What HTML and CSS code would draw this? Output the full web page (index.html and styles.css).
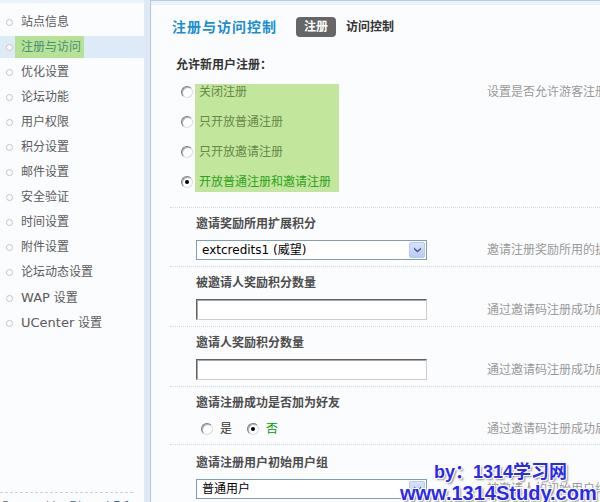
FILE: index.html
```html
<!DOCTYPE html>
<html lang="zh-CN">
<head>
<meta charset="utf-8">
<title>注册与访问控制</title>
<link rel="stylesheet" href="styles.css">
</head>
<body>
<div class="page">
  <aside class="sidebar">
    <ul class="menu">
      <li class="menu-item"><span class="bullet"></span><span class="menu-text">站点信息</span></li>
      <li class="menu-item is-active"><span class="bullet"></span><span class="menu-text">注册与访问</span></li>
      <li class="menu-item"><span class="bullet"></span><span class="menu-text">优化设置</span></li>
      <li class="menu-item"><span class="bullet"></span><span class="menu-text">论坛功能</span></li>
      <li class="menu-item"><span class="bullet"></span><span class="menu-text">用户权限</span></li>
      <li class="menu-item"><span class="bullet"></span><span class="menu-text">积分设置</span></li>
      <li class="menu-item"><span class="bullet"></span><span class="menu-text">邮件设置</span></li>
      <li class="menu-item"><span class="bullet"></span><span class="menu-text">安全验证</span></li>
      <li class="menu-item"><span class="bullet"></span><span class="menu-text">时间设置</span></li>
      <li class="menu-item"><span class="bullet"></span><span class="menu-text">附件设置</span></li>
      <li class="menu-item"><span class="bullet"></span><span class="menu-text">论坛动态设置</span></li>
      <li class="menu-item menu-item-latin"><span class="bullet"></span><span class="menu-text"><span class="latin">WAP</span> 设置</span></li>
      <li class="menu-item menu-item-latin"><span class="bullet"></span><span class="menu-text"><span class="latin">UCenter</span> 设置</span></li>
    </ul>
    <div class="sidebar-foot">Powered by <span class="foot-link">Discuz! 7.1</span></div>
  </aside>
  <div class="strip"></div>
  <main class="main">
    <div class="header">
      <h1 class="title">注册与访问控制</h1>
      <span class="tab is-current">注册</span>
      <span class="tab">访问控制</span>
    </div>

    <section class="group">
      <div class="group-label">允许新用户注册：</div>
      <div class="option-grid">
        <div class="options">
          <div class="option"><span class="radio"></span><span class="option-text">关闭注册</span></div>
          <div class="option"><span class="radio"></span><span class="option-text">只开放普通注册</span></div>
          <div class="option"><span class="radio"></span><span class="option-text">只开放邀请注册</span></div>
          <div class="option is-checked"><span class="radio is-on"></span><span class="option-text">开放普通注册和邀请注册</span></div>
        </div>
        <div class="desc desc-top">设置是否允许游客注册</div>
      </div>
    </section>

    <section class="row">
      <div class="row-label">邀请奖励所用扩展积分</div>
      <div class="row-control">
        <div class="select"><span class="select-value">extcredits1 (威望)</span><span class="select-btn"><svg width="7" height="6" viewBox="0 0 7 6"><path d="M0 0.5 L3.5 3.5 L7 0.5 L7 2.5 L3.5 5.5 L0 2.5 Z" fill="#4d6185"/></svg></span></div>
      </div>
      <div class="desc">邀请注册奖励所用的扩展积分</div>
    </section>

    <section class="row">
      <div class="row-label">被邀请人奖励积分数量</div>
      <div class="row-control"><div class="input"></div></div>
      <div class="desc">通过邀请码注册成功后被邀请人获得的积分</div>
    </section>

    <section class="row">
      <div class="row-label">邀请人奖励积分数量</div>
      <div class="row-control"><div class="input"></div></div>
      <div class="desc">通过邀请码注册成功后邀请人获得的积分</div>
    </section>

    <section class="row">
      <div class="row-label">邀请注册成功是否加为好友</div>
      <div class="row-control">
        <div class="radio-group">
          <span class="choice"><span class="radio"></span><span class="choice-text">是</span></span>
          <span class="choice is-checked"><span class="radio is-on"></span><span class="choice-text">否</span></span>
        </div>
      </div>
      <div class="desc">通过邀请码注册成功后，邀请人和被邀请人自动加为好友</div>
    </section>

    <section class="row row-last">
      <div class="row-label">邀请注册用户初始用户组</div>
      <div class="row-control">
        <div class="select"><span class="select-value">普通用户</span><span class="select-btn"><svg width="7" height="6" viewBox="0 0 7 6"><path d="M0 0.5 L3.5 3.5 L7 0.5 L7 2.5 L3.5 5.5 L0 2.5 Z" fill="#4d6185"/></svg></span></div>
      </div>
      <div class="desc">被邀请人的初始用户组</div>
    </section>
  </main>

  <div class="watermark">
    <div class="wm-line1">by：1314学习网</div>
    <div class="wm-line2">www.1314Study.com</div>
  </div>
</div>
</body>
</html>
```

FILE: styles.css
```css
* { box-sizing: border-box; }

html, body {
  margin: 0;
  padding: 0;
  height: 100%;
  overflow: hidden;
}

body {
  font-family: "DejaVu Sans", "Noto Sans CJK SC", sans-serif;
  font-size: 12px;
  line-height: 16px;
  color: #555;
  background: #fbfcfe;
}

.page {
  position: relative;
  display: flex;
  height: 502px;
  overflow: hidden;
}

/* ---------- sidebar ---------- */
.sidebar {
  width: 144px;
  flex: none;
  display: flex;
  flex-direction: column;
  padding-top: 11px;
  background: linear-gradient(#e9f2fa 0 3px, #fafcfe 3px);
}

.menu {
  list-style: none;
  margin: 0;
  padding: 0;
  display: flex;
  flex-direction: column;
  gap: 3px;
}

.menu-item {
  display: flex;
  align-items: center;
  height: 22px;
  padding-left: 6px;
  color: #5a5a5a;
}

.menu-item-latin { margin-top: 1px; margin-bottom: -1px; }

.menu-item.is-active { background: #dcebf7; }

.bullet {
  flex: none;
  width: 7px;
  height: 7px;
  margin-right: 2px;
  border: 1px solid #c2c2c2;
  border-radius: 50%;
  background: #fff;
}

.menu-text {
  line-height: 22px;
  padding: 0 3px 0 6px;
  white-space: nowrap;
}

.is-active .menu-text {
  background: #b5e297;
  color: #4b8e72;
}

.latin { font-size: 13px; }

.sidebar-foot {
  margin-top: auto;
  margin-right: 11px;
  height: 10px;
  padding-top: 5px;
  border-top: 1px dashed #d2d2d2;
  font-size: 11px;
  line-height: 16px;
  color: #666;
  white-space: nowrap;
  text-align: center;
}

.foot-link { color: #1c6eb8; }

.strip {
  width: 6px;
  flex: none;
  background: #dde9f5;
}

/* ---------- main ---------- */
.main {
  flex: 1;
  min-width: 0;
  padding: 16px 0 0 19px;
  border-left: 1px solid #abcadc;
  border-top: 1px solid #b6cfde;
  background: linear-gradient(#e9f2fa 0 4px, #fbfcfe 4px);
}

.header {
  display: flex;
  align-items: center;
  height: 20px;
}

.title {
  margin: 0 0 0 2px;
  font-size: 14px;
  line-height: 20px;
  font-weight: bold;
  letter-spacing: 1px;
  color: #1a8ed0;
}

.tab {
  height: 20px;
  line-height: 20px;
  padding: 0 8px;
  margin-left: 2px;
  border-radius: 4px;
  font-weight: bold;
  color: #333;
}

.tab.is-current {
  margin-left: 19px;
  background: #666;
  color: #fff;
}

.group-label {
  margin: 20px 0 11px 6px;
  font-weight: bold;
  color: #333;
}

.option-grid {
  display: grid;
  grid-template-columns: 317px minmax(0, 1fr);
  padding-bottom: 15px;
}

.options {
  display: flex;
  flex-direction: column;
  padding-left: 11px;
}

.option {
  display: flex;
  align-items: flex-start;
}

.option .radio { margin-top: 2px; }

.option-text {
  width: 144px;
  margin-left: 2px;
  padding: 0 0 14px 4px;
  background: #c2e69b;
  color: #67864a;
  white-space: nowrap;
}

.option:last-child .option-text { padding-bottom: 2px; }

.option.is-checked .option-text { color: #2aa21c; }

.desc {
  color: #999;
  white-space: nowrap;
}

.desc-top { align-self: start; }

/* radio */
.radio {
  position: relative;
  flex: none;
  width: 12px;
  height: 12px;
  border: 1px solid;
  border-color: #7c7c7c #dcdcdc #dcdcdc #7c7c7c;
  border-radius: 50%;
  background: #fff;
  box-shadow: inset 1px 1px 0 #b4b4b4;
}

.radio.is-on::after {
  content: "";
  position: absolute;
  left: 3px;
  top: 3px;
  width: 4px;
  height: 4px;
  border-radius: 50%;
  background: #000;
}

/* rows */
.row {
  display: grid;
  grid-template-columns: 317px minmax(0, 1fr);
  row-gap: 8px;
  padding: 8px 0 6px;
  border-top: 1px dotted #c9d9e5;
}

.row-last { padding-top: 10px; }

.row-label {
  grid-column: 1;
  padding-left: 26px;
  font-weight: bold;
  color: #4d4d4d;
}

.row-control {
  grid-column: 1;
  padding-left: 26px;
}

.row .desc {
  grid-column: 2;
  grid-row: 2;
  align-self: center;
}

.select {
  display: flex;
  align-items: center;
  width: 231px;
  height: 20px;
  border: 1px solid #7f9db9;
  background: #fff;
}

.select-value {
  padding-left: 5px;
  color: #000;
  white-space: nowrap;
}

.select-btn {
  display: flex;
  align-items: center;
  justify-content: center;
  width: 16px;
  height: 16px;
  margin: 0 1px 0 auto;
  border: 1px solid #b7c9ee;
  border-radius: 2px;
  background: linear-gradient(#d5e2fc, #b9ccf3);
}

.input {
  width: 231px;
  height: 21px;
  border: 1px solid #cdcdcd;
  border-top-color: #626262;
  border-left-color: #626262;
  background: #fff;
  box-shadow: inset 1px 1px 0 #a8a8a8;
}

.radio-group {
  display: flex;
  align-items: center;
  height: 19px;
  padding-left: 5px;
}

.choice {
  display: flex;
  align-items: center;
  gap: 7px;
  margin-right: 15px;
}

.choice-text { color: #333; }

.choice.is-checked .choice-text { color: #009900; }

/* watermark overlay */
.watermark {
  position: absolute;
  left: 0;
  top: 0;
  width: 600px;
  height: 502px;
  pointer-events: none;
  font-family: "Liberation Sans", "Noto Sans CJK SC", sans-serif;
  font-weight: bold;
  color: #2a2aee;
  text-shadow: 1px 1px 0 #fff, -1px -1px 0 #fff, 1px -1px 0 #fff, -1px 1px 0 #fff, 2px 2px 2px #8a8a8a;
  white-space: nowrap;
}

.wm-line1 {
  position: absolute;
  left: 434px;
  top: 463px;
  font-size: 18px;
  line-height: 18px;
}

.wm-line2 {
  position: absolute;
  left: 400px;
  top: 483px;
  font-size: 20px;
  line-height: 20px;
}
```
